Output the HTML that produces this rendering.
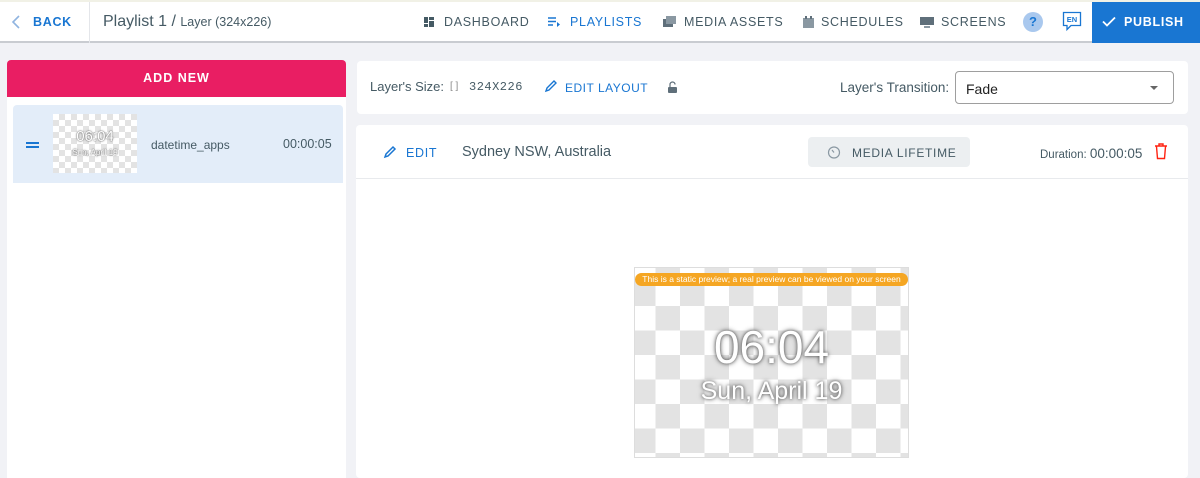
<!DOCTYPE html>
<html><head><style>
*{box-sizing:border-box;margin:0;padding:0}
body{width:1200px;height:478px;overflow:hidden;background:#f1f2f6;font-family:"Liberation Sans",sans-serif;position:relative;color:#455a64}
.abs{position:absolute}
.hdr{left:0;top:0;width:1200px;height:43px;background:#fff;border-bottom:2px solid #c9ccd1;border-top:2px solid #f1f1e6}
.nav{font-size:12.5px;letter-spacing:0.7px;color:#455a64;top:15px;font-weight:500}
.card{background:#fff;border-radius:4px}
.chk{background-color:#fff;background-image:linear-gradient(45deg,#e3e3e3 25%,transparent 25%,transparent 75%,#e3e3e3 75%),linear-gradient(45deg,#e3e3e3 25%,transparent 25%,transparent 75%,#e3e3e3 75%)}
</style></head><body>
<div class="abs hdr"></div>
<div class="abs" style="left:89px;top:2px;width:1px;height:41px;background:#e4e6ea"></div>
<svg class="abs" style="left:11px;top:15px" width="10" height="14"><path d="M8 1L2 7l6 6" stroke="#90b4e0" stroke-width="1.6" fill="none"/></svg>
<div class="abs nav" style="left:33px;color:#1976d2;font-weight:bold">BACK</div>
<div class="abs" style="left:103px;top:13px;font-size:16px;color:#455a64">Playlist 1 / <span style="font-size:12.5px">Layer (324x226)</span></div>
<svg class="abs" style="left:424px;top:17px" width="10" height="10"><rect x="0" y="0" width="4" height="6" fill="#455a64"/><rect x="5" y="0" width="5" height="3" fill="#455a64"/><rect x="0" y="7" width="4" height="3" fill="#455a64"/><rect x="5" y="4" width="5" height="6" fill="#455a64"/></svg>
<div class="abs nav" style="left:444px">DASHBOARD</div>
<svg class="abs" style="left:548px;top:17px" width="12" height="10"><path d="M0 1h8M0 4.5h8M0 8h5" stroke="#1976d2" stroke-width="1.4"/><path d="M9 5l3 2.5-3 2.5z" fill="#1976d2"/></svg>
<div class="abs nav" style="left:570px;color:#1976d2">PLAYLISTS</div>
<svg class="abs" style="left:663px;top:16px" width="13" height="11"><rect x="0" y="3" width="10" height="8" fill="#5f6f7a"/><rect x="3" y="0" width="10" height="8" fill="#8a98a2"/></svg>
<div class="abs nav" style="left:684px">MEDIA ASSETS</div>
<svg class="abs" style="left:803px;top:16px" width="11" height="12"><rect x="0" y="2" width="11" height="10" fill="#8a98a2"/><rect x="2" y="0" width="2" height="3" fill="#5f6f7a"/><rect x="7" y="0" width="2" height="3" fill="#5f6f7a"/></svg>
<div class="abs nav" style="left:821px">SCHEDULES</div>
<svg class="abs" style="left:920px;top:17px" width="14" height="11"><rect x="0" y="0" width="14" height="8" fill="#5f6f7a"/><rect x="4" y="9" width="6" height="2" fill="#8a98a2"/></svg>
<div class="abs nav" style="left:941px">SCREENS</div>
<div class="abs" style="left:1023px;top:12px;width:20px;height:20px;border-radius:50%;background:#a9c8ee;color:#1976d2;font-weight:bold;font-size:13px;text-align:center;line-height:20px">?</div>
<svg class="abs" style="left:1062px;top:11px" width="20" height="22"><path d="M1.5 1.5h17v13H9l-4 4v-4H1.5z" fill="#fff" stroke="#1976d2" stroke-width="1.3"/><text x="10" y="11" font-size="7.5" text-anchor="middle" fill="#1976d2" font-family="Liberation Sans" font-weight="bold">EN</text></svg>
<div class="abs" style="left:1092px;top:2px;width:108px;height:41px;background:#1976d2"></div>
<svg class="abs" style="left:1102px;top:16px" width="14" height="11"><path d="M1 5.5l4 4L13 1.5" stroke="#fff" stroke-width="1.8" fill="none"/></svg>
<div class="abs nav" style="left:1124px;color:#fff;font-weight:bold">PUBLISH</div>

<div class="abs" style="left:7px;top:60px;width:339px;height:418px;background:#fff;border-radius:4px 4px 0 0"></div>
<div class="abs" style="left:7px;top:60px;width:339px;height:37px;background:#e91e63;border-radius:4px 4px 0 0;color:#fff;font-weight:bold;font-size:12.5px;letter-spacing:1px;text-align:center;line-height:37px">ADD NEW</div>
<div class="abs" style="left:13px;top:105px;width:330px;height:78px;background:#e3edf9;border-radius:4px 4px 0 0"></div>
<div class="abs" style="left:26px;top:142px;width:13px;height:2px;background:#1976d2"></div>
<div class="abs" style="left:26px;top:146px;width:13px;height:2px;background:#1976d2"></div>
<div class="abs chk" style="left:53px;top:114px;width:84px;height:59px;background-size:12px 12px;background-position:0 0,6px 6px"></div>
<div class="abs" style="left:53px;top:128px;width:84px;text-align:center;font-size:15px;color:#fff;text-shadow:0 0 1px #555,0 0 2px #777">06:04</div>
<div class="abs" style="left:53px;top:148px;width:84px;text-align:center;font-size:8px;color:#fff;text-shadow:0 0 1px #555,0 0 2px #777">Sun, April 19</div>
<div class="abs" style="left:151px;top:138px;font-size:12px">datetime_apps</div>
<div class="abs" style="left:283px;top:137px;font-size:12.5px">00:00:05</div>

<div class="abs card" style="left:357px;top:61px;width:831px;height:53px"></div>
<div class="abs" style="left:370px;top:79px;font-size:13px">Layer's Size:</div>
<div class="abs" style="left:450px;top:81px;font-size:10px;color:#888">[ ]</div>
<div class="abs" style="left:469px;top:80px;font-size:12px;letter-spacing:0.5px;font-family:'Liberation Mono',monospace">324X226</div>
<svg class="abs" style="left:544px;top:80px" width="13" height="13"><path d="M2 11l1-3 7-7 2 2-7 7z" stroke="#1976d2" stroke-width="1.4" fill="none"/></svg>
<div class="abs nav" style="left:565px;top:81px;color:#1976d2;font-size:12px;letter-spacing:0.5px">EDIT LAYOUT</div>
<svg class="abs" style="left:667px;top:81px" width="11" height="12"><path d="M3 6V3.5a2.5 2.5 0 0 1 5 0" stroke="#5f6f7a" stroke-width="1.2" fill="none"/><rect x="1" y="6" width="9" height="6" rx="1" fill="#5f6f7a"/></svg>
<div class="abs" style="left:840px;top:80px;font-size:13.5px">Layer's Transition:</div>
<div class="abs" style="left:955px;top:71px;width:219px;height:33px;border:1px solid #9e9e9e;border-radius:4px;background:#fff;font-size:14px;color:#222;padding:9px 0 0 10px">Fade</div>
<div class="abs" style="left:1150px;top:86px;border:4px solid transparent;border-top:4px solid #666"></div>

<div class="abs card" style="left:356px;top:125px;width:832px;height:353px"></div>
<div class="abs" style="left:356px;top:178px;width:832px;height:1px;background:#e8eaed"></div>
<svg class="abs" style="left:383px;top:145px" width="14" height="14"><path d="M2 12l1-3 7-7 2 2-7 7z" stroke="#1976d2" stroke-width="1.5" fill="none"/></svg>
<div class="abs nav" style="left:406px;top:146px;color:#1976d2;font-size:12.5px">EDIT</div>
<div class="abs" style="left:462px;top:144px;font-size:14.5px">Sydney NSW, Australia</div>
<div class="abs" style="left:808px;top:137px;width:162px;height:30px;background:#eceff1;border-radius:4px"></div>
<svg class="abs" style="left:827px;top:145px" width="14" height="14"><circle cx="7" cy="7.5" r="5.5" stroke="#8a98a2" stroke-width="1.2" fill="none"/><path d="M7 7.5L5 5" stroke="#8a98a2" stroke-width="1.2"/></svg>
<div class="abs nav" style="left:852px;top:146px;font-size:12px">MEDIA LIFETIME</div>
<div class="abs" style="left:1040px;top:146px;font-size:11.5px">Duration: <span style="font-size:13.5px">00:00:05</span></div>
<svg class="abs" style="left:1154px;top:143px" width="14" height="17"><path d="M1 3h12M5 3V1h4v2M2.5 3.5l1 12h7l1-12" stroke="#f21" stroke-width="1.4" fill="none"/></svg>

<div class="abs chk" style="left:634px;top:267px;width:275px;height:191px;border:1px solid #ddd;background-size:49px 49px;background-position:-4px -11px,20.5px 13.5px"></div>
<div class="abs" style="left:635px;top:273px;width:273px;height:13px;background:#f5a623;border-radius:7px;color:#fff;font-size:8.5px;text-align:center;line-height:13px">This is a static preview; a real preview can be viewed on your screen</div>
<div class="abs" style="left:634px;top:320px;width:275px;text-align:center;font-size:46px;color:#fff;text-shadow:0 0 3px #555,0 0 6px #888">06:04</div>
<div class="abs" style="left:634px;top:377px;width:275px;text-align:center;font-size:25px;color:#fff;text-shadow:0 0 3px #555,0 0 6px #888">Sun, April 19</div>
</body></html>
